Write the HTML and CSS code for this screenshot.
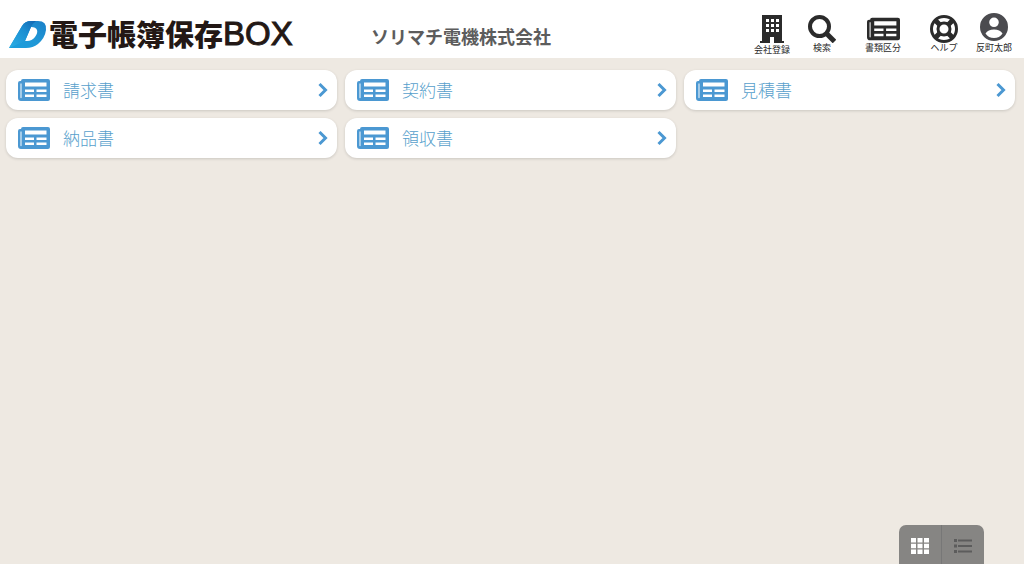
FILE: index.html
```html
<!DOCTYPE html>
<html lang="ja">
<head>
    <meta charset="UTF-8">
    <meta name="viewport" content="width=device-width, initial-scale=1.0">
    <title>電子帳簿保存BOX</title>
    <link rel="stylesheet" href="styles.css">
</head>
<body>
    <svg class="sprite" aria-hidden="true">
        <symbol id="paper" viewBox="0 0 32 22">
            <path fill-rule="evenodd" d="M5 0h25q2 0 2 2v18q0 2-2 2H3q-3 0-3-3V4q0-2 2-2h1Q3 0 5 0zM2.500 4.500v14q0 .8.500.8t.5-.8v-14zM7 3.500v4h21.500v-4zM7 10.500v2.500h9v-2.500zM18.500 10.500v2.500h10v-2.500zM7 15.500v2.500h9v-2.500zM18.500 15.500v2.500h10v-2.500z"/>
        </symbol>
        <symbol id="chevron" viewBox="0 0 10 16">
            <path d="M1.500 2l6 6-6 6" fill="none" stroke="currentColor" stroke-width="3"/>
        </symbol>
    </svg>

    <header class="header">
        <a class="logo" href="#">
            <svg class="logo-mark" viewBox="0 0 38 28" aria-hidden="true">
                <defs>
                    <linearGradient id="logoBlue" x1="0" y1="1" x2="1" y2="0">
                        <stop offset="0" stop-color="#1c9fdd"/>
                        <stop offset="0.5" stop-color="#1f97d6"/>
                        <stop offset="1" stop-color="#1b80c8"/>
                    </linearGradient>
                    <linearGradient id="logoFold" x1="0" y1="1" x2="1" y2="0">
                        <stop offset="0" stop-color="#2bb0e6"/>
                        <stop offset="0.6" stop-color="#1c8fd2"/>
                        <stop offset="1" stop-color="#1164b0"/>
                    </linearGradient>
                </defs>
                <path fill="url(#logoBlue)" fill-rule="evenodd" d="M0 27L13 5Q16 0 22 0h7q9 0 8 9-1 8-8 14-5 4-12 4zM22 6L16 20h2q5 0 8-4 3-4 2-7-1-3-6-3z"/>
                <path fill="url(#logoFold)" d="M0 27L13 5Q16 0 22 0h5q-3 2-5 6L16 20z"/>
            </svg>
            <span class="logo-name"><span class="logo-text">電子帳簿保存</span><span class="logo-box">BOX</span></span>
        </a>
        <h1 class="company">ソリマチ電機株式会社</h1>
        <nav class="menu">
            <a class="menu-item menu-company" href="#">
                <svg class="menu-icon" viewBox="0 0 28 28" aria-hidden="true">
                    <path fill-rule="evenodd" d="M4 0h20v26h2v2H16v-6h-4v6H2v-2h2zM8 4v3h3V4zM13 4v3h3V4zM18 4v3h3V4zM8 9v3h3V9zM13 9v3h3V9zM18 9v3h3V9zM8 14v3h3v-3zM13 14v3h3v-3zM18 14v3h3v-3z"/>
                </svg>
                <span>会社登録</span>
            </a>
            <a class="menu-item" href="#">
                <svg class="menu-icon" viewBox="0 0 28 28" aria-hidden="true">
                    <circle cx="11.500" cy="11.500" r="9.500" fill="none" stroke="currentColor" stroke-width="4"/>
                    <path d="M18 18l8.500 8.500" stroke="currentColor" stroke-width="5"/>
                </svg>
                <span>検索</span>
            </a>
            <a class="menu-item menu-item-wide" href="#">
                <svg class="menu-icon menu-icon-wide" aria-hidden="true"><use href="#paper"/></svg>
                <span>書類区分</span>
            </a>
            <a class="menu-item" href="#">
                <svg class="menu-icon" viewBox="0 0 28 28" aria-hidden="true">
                    <circle cx="14" cy="14" r="12.500" fill="none" stroke="currentColor" stroke-width="3"/>
                    <circle cx="14" cy="14" r="6" fill="none" stroke="currentColor" stroke-width="3"/>
                    <path d="M5 5l5 5M23 5l-5 5M5 23l5-5M23 23l-5-5" stroke="currentColor" stroke-width="5"/>
                </svg>
                <span>ヘルプ</span>
            </a>
            <a class="menu-item menu-user" href="#">
                <svg class="menu-icon" viewBox="0 0 28 28" aria-hidden="true">
                    <path fill-rule="evenodd" d="M14 0a14 14 0 1 1 0 28a14 14 0 1 1 0-28zM14 4.500a4.800 4.800 0 1 0 0 9.600a4.800 4.800 0 1 0 0-9.600zM5.500 20.500q3 4.500 8.500 4.500t8.500-4.500q-2.500-4-8.500-4t-8.500 4z"/>
                </svg>
                <span>反町太郎</span>
            </a>
        </nav>
    </header>

    <main class="documents">
        <a class="card" href="#">
            <svg class="card-icon" aria-hidden="true"><use href="#paper"/></svg>
            <span class="card-name">請求書</span>
            <svg class="card-arrow" aria-hidden="true"><use href="#chevron"/></svg>
        </a>
        <a class="card" href="#">
            <svg class="card-icon" aria-hidden="true"><use href="#paper"/></svg>
            <span class="card-name">契約書</span>
            <svg class="card-arrow" aria-hidden="true"><use href="#chevron"/></svg>
        </a>
        <a class="card" href="#">
            <svg class="card-icon" aria-hidden="true"><use href="#paper"/></svg>
            <span class="card-name">見積書</span>
            <svg class="card-arrow" aria-hidden="true"><use href="#chevron"/></svg>
        </a>
        <a class="card" href="#">
            <svg class="card-icon" aria-hidden="true"><use href="#paper"/></svg>
            <span class="card-name">納品書</span>
            <svg class="card-arrow" aria-hidden="true"><use href="#chevron"/></svg>
        </a>
        <a class="card" href="#">
            <svg class="card-icon" aria-hidden="true"><use href="#paper"/></svg>
            <span class="card-name">領収書</span>
            <svg class="card-arrow" aria-hidden="true"><use href="#chevron"/></svg>
        </a>
    </main>

    <div class="view-switch">
        <button class="view-button active" type="button" aria-label="グリッド表示">
            <svg viewBox="0 0 18 16" aria-hidden="true">
                <path d="M0 0h5v4.500H0zM6.500 0h5v4.500h-5zM13 0h5v4.500h-5zM0 5.700h5v4.500H0zM6.500 5.700h5v4.500h-5zM13 5.700h5v4.500h-5zM0 11.500h5V16H0zM6.500 11.500h5V16h-5zM13 11.500h5V16h-5z"/>
            </svg>
        </button>
        <button class="view-button" type="button" aria-label="リスト表示">
            <svg viewBox="0 0 18 16" aria-hidden="true">
                <path d="M0 1h3v3H0zM4 1.500h14v2H4zM0 6.500h3v3H0zM4 7h14v2H4zM0 12h3v3H0zM4 12.500h14v2H4z"/>
            </svg>
        </button>
    </div>
</body>
</html>
```

FILE: styles.css
```css
* {
    box-sizing: border-box;
}
body {
    margin: 0;
    background: #eee9e2;
    color: #333;
    font-family: "Noto Sans CJK JP", sans-serif;
}
a {
    color: inherit;
    text-decoration: none;
}
svg {
    display: block;
    fill: currentColor;
}
.sprite {
    display: none;
}

/* header */
.header {
    display: flex;
    align-items: center;
    height: 58px;
    padding: 0 5px 0 9px;
    background: #fff;
}
.logo {
    display: flex;
    align-items: center;
    gap: 2px;
    width: 362px;
    padding-top: 12px;
    color: #231815;
}
.logo-mark {
    width: 38px;
    height: 28px;
}
.logo-name {
    display: flex;
    align-items: center;
    height: 28px;
    padding-bottom: 2px;
    line-height: 32px;
}
.logo-text {
    padding-bottom: 2px;
    font-size: 29px;
    font-weight: 900;
}
.logo-box {
    font-family: "Liberation Sans", Arial, sans-serif;
    font-size: 33px;
    -webkit-text-stroke: 1px #231815;
}
.company {
    margin: 0;
    padding-top: 14px;
    color: #5c5c5c;
    font-size: 18px;
    font-weight: 700;
    line-height: 28px;
}
.menu {
    display: flex;
    align-self: flex-start;
    margin-left: auto;
    padding-top: 13px;
}
.menu-item {
    display: flex;
    flex-direction: column;
    align-items: center;
    width: 50px;
    padding-top: 2px;
    color: #2b2b2b;
    font-size: 9px;
    line-height: 10px;
    white-space: nowrap;
}
.menu-item-wide {
    width: 72px;
}
.menu-icon {
    width: 28px;
    height: 28px;
}
.menu-icon-wide {
    width: 33px;
}
.menu-company .menu-icon {
    margin-bottom: 2px;
}
.menu-user {
    padding-top: 0;
}
.menu-user .menu-icon {
    margin-bottom: 2px;
    color: #4b4b4f;
}

/* document list */
.documents {
    display: grid;
    grid-template-columns: repeat(3, 1fr);
    gap: 8px;
    padding: 12px 9px 12px 6px;
}
.card {
    display: flex;
    align-items: center;
    height: 40px;
    padding: 0 9px 1px 12px;
    border-radius: 12px;
    background: #fff;
    box-shadow: 0 1px 3px rgba(0, 0, 0, 0.15);
    color: #4b98d2;
}
.card-icon {
    width: 32px;
    height: 22px;
    margin-right: 13px;
}
.card-name {
    flex: 1;
    color: #579fcc;
    font-size: 17px;
    font-weight: 300;
    line-height: 24px;
}
.card-arrow {
    width: 10px;
    height: 16px;
}

/* grid / list switch */
.view-switch {
    position: fixed;
    right: 40px;
    bottom: 0;
    display: flex;
    overflow: hidden;
    border-radius: 7px 7px 0 0;
    background: #868583;
}
.view-button {
    display: flex;
    align-items: center;
    justify-content: center;
    width: 42px;
    height: 39px;
    padding: 3px 0 0;
    border: 0;
    background: none;
    color: #5c5c5c;
    cursor: pointer;
}
.view-button.active {
    width: 43px;
    border-right: 1px solid #777;
    color: #fff;
}
.view-button svg {
    width: 18px;
    height: 16px;
}
```
